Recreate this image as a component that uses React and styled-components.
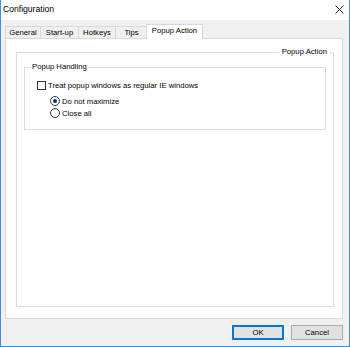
import React from "react"
import styled, { createGlobalStyle } from "styled-components"

const GlobalStyle = createGlobalStyle`
  html, body {
    margin: 0;
    padding: 0;
    background: #ffffff;
  }
  body {
    font-family: "Liberation Sans", Arial, sans-serif;
    font-size: 7.7px;
    color: #000;
  }
`

const Window = styled.div`
  box-sizing: border-box;
  width: 350px;
  height: 347px;
  border: 1px solid #3c8fdc;
  border-top: none;
  display: flex;
  flex-direction: column;
  background: #f0f0f0;
`

const TitleBar = styled.div`
  height: 20px;
  background: #fff;
  display: flex;
  align-items: center;
  justify-content: space-between;
  padding: 0 5px 2px 2px;
  box-sizing: border-box;
`

const Title = styled.span`
  font-size: 8.6px;
`

const Body = styled.div`
  flex: 1;
  display: flex;
  flex-direction: column;
  padding: 4px 6px 0 4px;
  min-height: 0;
`

const TabStrip = styled.div`
  display: flex;
  align-items: flex-end;
  height: 15px;
  margin-bottom: -1px;
  position: relative;
  z-index: 1;
`

const Tab = styled.div`
  box-sizing: border-box;
  width: ${(p) => p.$width}px;
  height: ${(p) => (p.$active ? "15px" : "13px")};
  margin-left: ${(p) => (p.$active ? "-2px" : "0")};
  background: ${(p) => (p.$active ? "#fff" : "#f0f0f0")};
  border: 1px solid #d9d9d9;
  border-bottom: ${(p) => (p.$active ? "none" : "1px solid #d9d9d9")};
  border-left: ${(p) => (p.$first || p.$active ? "1px solid #d9d9d9" : "none")};
  display: flex;
  align-items: center;
  justify-content: center;
  line-height: 1;
  padding-top: ${(p) => (p.$active ? "0" : "1px")};
  padding-bottom: ${(p) => (p.$active ? "2px" : "0")};
  position: relative;
  z-index: ${(p) => (p.$active ? 2 : 1)};
`

const Panel = styled.div`
  flex: 1;
  background: #fff;
  border: 1px solid #d9d9d9;
  display: flex;
  flex-direction: column;
  padding: 8px 8px 11px 10px;
  min-height: 0;
`

const Frame = styled.fieldset`
  flex: 1;
  margin: 0;
  min-width: 0;
  border: 1px solid #dcdcdc;
  padding: 5px 7px;
`

const FrameLegend = styled.legend`
  margin-left: auto;
  margin-right: -4px;
  padding: 0 3px;
  line-height: 10px;
`

const GroupBox = styled.fieldset`
  margin: 0;
  min-width: 0;
  border: 1px solid #dcdcdc;
  padding: 7px 12px 10px 12px;
  display: flex;
  flex-direction: column;
`

const GroupLegend = styled.legend`
  margin-left: -6px;
  padding: 0 1px;
  line-height: 10px;
`

const OptionRow = styled.label`
  display: flex;
  align-items: center;
  gap: 2px;
  height: 12px;
  margin-left: ${(p) => p.$indent || 0}px;
  margin-top: ${(p) => p.$gap || 0}px;
`

const CheckBox = styled.span`
  width: 9px;
  height: 9px;
  box-sizing: border-box;
  border: 1px solid #333;
  background: #fff;
`

const Radio = styled.span`
  width: 10px;
  height: 10px;
  box-sizing: border-box;
  border-radius: 50%;
  border: 1px solid ${(p) => (p.$checked ? "#1f3b6a" : "#333")};
  background: #fff;
  display: flex;
  align-items: center;
  justify-content: center;

  &::after {
    content: "";
    display: ${(p) => (p.$checked ? "block" : "none")};
    width: 4px;
    height: 4px;
    border-radius: 50%;
    background: #13305f;
  }
`

const Footer = styled.div`
  height: 27px;
  box-sizing: border-box;
  display: flex;
  justify-content: flex-end;
  align-items: center;
  gap: 7px;
`

const Button = styled.button`
  width: 52px;
  height: 15px;
  box-sizing: border-box;
  padding: 0;
  font-family: inherit;
  font-size: 7.7px;
  color: #000;
  background: #e1e1e1;
  border: 1px solid ${(p) => (p.$default ? "#0078d7" : "#adadad")};
  box-shadow: ${(p) => (p.$default ? "inset 0 0 0 1px #0078d7" : "none")};
`

const CloseIcon = () => (
  <svg width="9" height="9" viewBox="0 0 9 9">
    <path d="M0.5 0.5 L8.5 8.5 M8.5 0.5 L0.5 8.5" stroke="#111" strokeWidth="0.9" fill="none" />
  </svg>
)

const tabs = [
  { label: "General", width: 36 },
  { label: "Start-up", width: 38 },
  { label: "Hotkeys", width: 37 },
  { label: "Tips", width: 32 },
  { label: "Popup Action", width: 57, active: true },
]

const App = () => {
  return (
    <>
      <GlobalStyle />
      <Window>
        <TitleBar>
          <Title>Configuration</Title>
          <CloseIcon />
        </TitleBar>
        <Body>
          <TabStrip>
            {tabs.map((t, i) => (
              <Tab key={t.label} $first={i === 0} $active={t.active} $width={t.width}>
                {t.label}
              </Tab>
            ))}
          </TabStrip>
          <Panel>
            <Frame>
              <FrameLegend>Popup Action</FrameLegend>
              <GroupBox>
                <GroupLegend>Popup Handling</GroupLegend>
                <OptionRow>
                  <CheckBox />
                  Treat popup windows as regular IE windows
                </OptionRow>
                <OptionRow $indent={13} $gap={4}>
                  <Radio $checked />
                  Do not maximize
                </OptionRow>
                <OptionRow $indent={13}>
                  <Radio />
                  Close all
                </OptionRow>
              </GroupBox>
            </Frame>
          </Panel>
          <Footer>
            <Button $default>OK</Button>
            <Button>Cancel</Button>
          </Footer>
        </Body>
      </Window>
    </>
  )
}

export default App
